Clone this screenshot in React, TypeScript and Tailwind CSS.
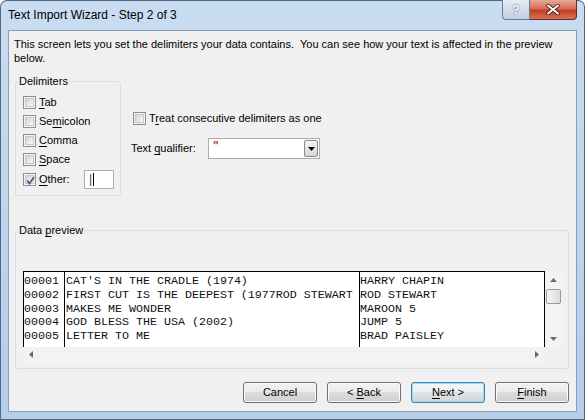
import type { ReactNode } from 'react';

const rows = [
  ['00001', "CAT'S IN THE CRADLE (1974)", 'HARRY CHAPIN'],
  ['00002', 'FIRST CUT IS THE DEEPEST (1977ROD STEWART', 'ROD STEWART'],
  ['00003', 'MAKES ME WONDER', 'MAROON 5'],
  ['00004', 'GOD BLESS THE USA (2002)', 'JUMP 5'],
  ['00005', 'LETTER TO ME', 'BRAD PAISLEY'],
];

const Key = ({ children }: { children: ReactNode }) => <span className="underline underline-offset-[2px]">{children}</span>;

const CheckBox = ({ checked }: { checked?: boolean }) => (
  <span className="relative flex h-[13px] w-[13px] shrink-0 items-center justify-center border border-[#8e8f8f] bg-[#f4f4f4]">
    <span className="h-[9px] w-[9px] border border-[#c8c8c8] bg-gradient-to-br from-[#d2d2d2] to-[#fafafa]" />
    {checked && (
      <svg className="absolute left-[1px] top-[1px]" width="11" height="11" viewBox="0 0 11 11">
        <path d="M2 5.5 L4.5 8.5 L9 2" fill="none" stroke="#4a5f8f" strokeWidth="1.8" />
      </svg>
    )}
  </span>
);

const Arrow = ({ dir }: { dir: 'up' | 'down' | 'left' | 'right' }) => {
  const d = {
    up: 'M0 4 L3.5 0 L7 4 Z',
    down: 'M0 0 L7 0 L3.5 4 Z',
    left: 'M4 0 L4 7 L0 3.5 Z',
    right: 'M0 0 L4 3.5 L0 7 Z',
  }[dir];
  const horiz = dir === 'left' || dir === 'right';
  return (
    <svg width={horiz ? 4 : 7} height={horiz ? 7 : 4} viewBox={horiz ? '0 0 4 7' : '0 0 7 4'}>
      <path d={d} fill="#6a6a6a" />
    </svg>
  );
};

const Button = ({ children, focused }: { children: ReactNode; focused?: boolean }) => (
  <div
    className={
      focused
        ? 'flex h-[21px] w-[74px] items-center justify-center rounded-[3px] border border-[#3c7fb1] bg-[linear-gradient(#f4f7fa_0%,#ecf0f3_50%,#dfe3e6_50%,#d3d7da_100%)] shadow-[inset_0_0_0_1px_#a7d6f2]'
        : 'flex h-[21px] w-[74px] items-center justify-center rounded-[3px] border border-[#707070] bg-[linear-gradient(#f2f2f2_0%,#ebebeb_50%,#dddddd_50%,#cfcfcf_100%)] shadow-[inset_0_0_0_1px_#fbfbfb]'
    }
  >
    {children}
  </div>
);

export default function App() {
  return (
    <div className="h-[420px] w-[585px] overflow-hidden rounded-t-[7px] bg-gradient-to-b from-[#c9ddf2] via-[#bdd5ee] to-[#b4cde9] font-['Liberation_Sans',Arial,sans-serif] text-[11px] text-black shadow-[inset_0_0_0_1px_#56677d]">
      {/* title bar */}
      <div className="flex h-[30px] items-start justify-between">
        <div className="pl-[8px] pt-[8px] text-[12px] leading-[14px]">Text Import Wizard - Step 2 of 3</div>
        <div className="mr-[8px] flex">
          <div className="flex h-[20px] w-[28px] items-center justify-center rounded-bl-[4px] border border-t-0 border-[#6c7c91] bg-gradient-to-b from-[#e6edf6] to-[#bfcfe2] text-[13px] font-bold leading-none text-[#f8f8f8] [text-shadow:0_0_2px_#3a4a60]">
            ?
          </div>
          <div className="flex h-[20px] w-[47px] items-center justify-center rounded-br-[4px] border border-l-0 border-t-0 border-[#6b2b22] bg-[linear-gradient(#e9a899_0%,#d86b55_45%,#c43d24_55%,#d5735a_100%)]">
            <svg width="14" height="11" viewBox="0 0 14 11">
              <path d="M2 1.5 L12 9.5 M12 1.5 L2 9.5" stroke="#4a1a12" strokeWidth="3.6" strokeLinecap="round" />
              <path d="M2 1.5 L12 9.5 M12 1.5 L2 9.5" stroke="#ffffff" strokeWidth="2" strokeLinecap="round" />
            </svg>
          </div>
        </div>
      </div>

      {/* client area */}
      <div className="mx-[8px] flex h-[382px] flex-col border border-[#8d9db2] bg-[#f0f0f0]">
        <div className="mt-[6px] whitespace-nowrap pl-[5px] leading-[14px]">
          This screen lets you set the delimiters your data contains.&nbsp; You can see how your text is affected in the preview
          <br />
          below.
        </div>

        <div className="ml-[6px] mt-[9px] flex gap-[12px]">
          <fieldset className="h-[122px] w-[106px] rounded-[3px] border border-[#d5dfe5] p-0">
            <legend className="ml-[2px] px-[1px] leading-[14px]">Delimiters</legend>
            <div className="flex flex-col pl-[7px] pt-[5px]">
              <div className="flex h-[19px] items-center gap-[3px]">
                <CheckBox />
                <span><Key>T</Key>ab</span>
              </div>
              <div className="flex h-[19px] items-center gap-[3px]">
                <CheckBox />
                <span>Se<Key>m</Key>icolon</span>
              </div>
              <div className="flex h-[19px] items-center gap-[3px]">
                <CheckBox />
                <span><Key>C</Key>omma</span>
              </div>
              <div className="flex h-[19px] items-center gap-[3px]">
                <CheckBox />
                <span><Key>S</Key>pace</span>
              </div>
              <div className="flex h-[20px] items-center gap-[3px]">
                <CheckBox checked />
                <span className="w-[42px]"><Key>O</Key>ther:</span>
                <div className="flex h-[19px] w-[30px] items-center border border-[#abadb3] bg-white pl-[4px]">
                  <span className="text-[12px] text-[#444]">|</span>
                  <span className="ml-[1px] h-[13px] w-[1px] bg-black" />
                </div>
              </div>
            </div>
          </fieldset>

          <div className="flex flex-col pt-[36px]">
            <div className="flex h-[16px] items-center gap-[3px]">
              <CheckBox />
              <span>T<Key>r</Key>eat consecutive delimiters as one</span>
            </div>
            <div className="-ml-[2px] mt-[12px] flex h-[21px] items-center">
              <span className="w-[77px]">Text <Key>q</Key>ualifier:</span>
              <div className="flex h-[21px] w-[112px] items-center justify-between border border-[#abadb3] bg-white pl-[4px] pr-[1px]">
                <span className="-mt-[5px] text-[12px] font-bold text-[#a2531f]">"</span>
                <div className="flex h-[17px] w-[14px] items-center justify-center rounded-[2px] border border-[#8a8a8a] bg-gradient-to-b from-[#f4f4f4] to-[#d6d6d6]">
                  <svg width="7" height="4" viewBox="0 0 7 4">
                    <path d="M0 0 L7 0 L3.5 4 Z" fill="#000" />
                  </svg>
                </div>
              </div>
            </div>
          </div>
        </div>

        <fieldset className="ml-[6px] mt-[27px] h-[146px] w-[554px] rounded-[3px] border border-[#d5dfe5] p-0">
          <legend className="ml-[2px] px-[1px] leading-[14px]">
            Data <Key>p</Key>review
          </legend>
          <div className="pl-[7px] pt-[34px]">
            <div className="flex w-[539px] flex-col">
              <div className="flex">
                <div className="flex h-[76px] w-[522px] border-l border-r border-t border-black bg-white font-['Liberation_Mono',monospace] text-[11.67px] leading-[13.8px] text-[#111]">
                  <div className="w-[41px] shrink-0 border-r border-black pt-[3px]">
                    {rows.map((r) => (
                      <div key={r[0]} className="whitespace-pre">{r[0]}</div>
                    ))}
                  </div>
                  <div className="w-[295px] shrink-0 overflow-hidden border-r border-black pl-[1px] pt-[3px]">
                    {rows.map((r) => (
                      <div key={r[0]} className="whitespace-pre">{r[1]}</div>
                    ))}
                  </div>
                  <div className="flex-1 pt-[3px]">
                    {rows.map((r) => (
                      <div key={r[0]} className="whitespace-pre">{r[2]}</div>
                    ))}
                  </div>
                </div>
                <div className="flex h-[76px] w-[17px] flex-col bg-[#f3f3f3]">
                  <div className="flex h-[17px] items-center justify-center">
                    <Arrow dir="up" />
                  </div>
                  <div className="mx-[1px] mt-[1px] h-[15px] w-[15px] rounded-[2px] border border-[#9a9a9a] bg-gradient-to-r from-[#f6f6f6] to-[#dcdcdc]" />
                  <div className="flex-1" />
                  <div className="flex h-[17px] items-center justify-center">
                    <Arrow dir="down" />
                  </div>
                </div>
              </div>
              <div className="flex h-[15px] w-[522px] items-center justify-between bg-[#f3f3f3] px-[6px]">
                <Arrow dir="left" />
                <Arrow dir="right" />
              </div>
            </div>
          </div>
        </fieldset>

        <div className="mt-[13px] flex justify-end gap-[10px] pr-[7px]">
          <Button>Cancel</Button>
          <Button>
            &lt;&nbsp;<Key>B</Key>ack
          </Button>
          <Button focused>
            <Key>N</Key>ext &gt;
          </Button>
          <Button>
            <Key>F</Key>inish
          </Button>
        </div>
      </div>
    </div>
  );
}
